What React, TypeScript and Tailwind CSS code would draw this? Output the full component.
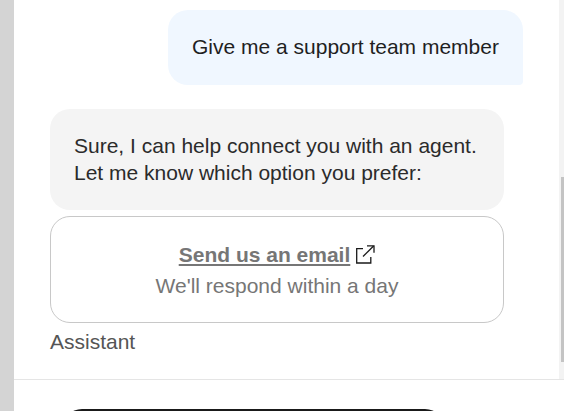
// App.tsx
import React from 'react';

const font = "font-['Liberation_Sans',Arial,sans-serif]";

const ExternalLinkIcon: React.FC = () => (
  <svg width="20" height="20" viewBox="0 0 20 20" fill="none" stroke="#1a1a1a" strokeWidth="1.3" className="shrink-0">
    <path d="M8 3.6H1.7V18H15.8V12" />
    <path d="M8 11.5L18.6 1" />
    <path d="M12 0.8H19V7.8" />
  </svg>
);

const App: React.FC = () => {
  return (
    <div className={`flex h-[411px] w-[564px] overflow-hidden bg-white ${font}`}>
      {/* Page behind the panel */}
      <div className="w-[14px] shrink-0 bg-[#d4d4d4]" />

      <div className="flex min-w-0 flex-1 flex-col">
        <div className="flex h-[379px] shrink-0">
          {/* Messages */}
          <div className="min-w-0 flex-1 pl-[36px] pr-[36px] pt-[10px]">
            <div className="flex justify-end">
              <div className="flex h-[75px] w-[355px] items-start rounded-[20px] rounded-br-[4px] bg-[#f0f7ff] px-[24px] pt-[23px] text-[21px] leading-[28px] text-[#1f1f1f]">
                Give me a support team member
              </div>
            </div>

            <div className="mt-[24px] h-[101px] w-[454px] rounded-[20px] bg-[#f4f4f4] px-[24px] pt-[23px] text-[21px] leading-[27px] text-[#2b2b2b]">
              Sure, I can help connect you with an agent.
              <br />
              Let me know which option you prefer:
            </div>

            <div className="mt-[6px] flex h-[107px] w-[454px] flex-col items-center rounded-[20px] border border-[#c8c8c8] pt-[23px] text-[21px] leading-[30px] text-[#767676]">
              <div className="flex items-center gap-[5px]">
                <span className="font-bold underline">Send us an email</span>
                <ExternalLinkIcon />
              </div>
              <div className="mt-[1px]">We'll respond within a day</div>
            </div>

            <div className="mt-[5px] text-[21px] leading-[28px] text-[#555555]">Assistant</div>
          </div>

          {/* Scrollbar */}
          <div className="flex w-[5px] shrink-0 justify-end bg-[#f3f3f3]">
            <div className="mt-[177px] h-[185px] w-[3px] bg-[#c4c4c4]" />
          </div>
        </div>

        {/* Composer */}
        <div className="flex-1 border-t border-[#e5e5e5] pl-[48px] pr-[119px] pt-[29px]">
          <div className="h-[40px] rounded-t-[20px] bg-[#1a1a1a]" />
        </div>
      </div>
    </div>
  );
};

export default App;
